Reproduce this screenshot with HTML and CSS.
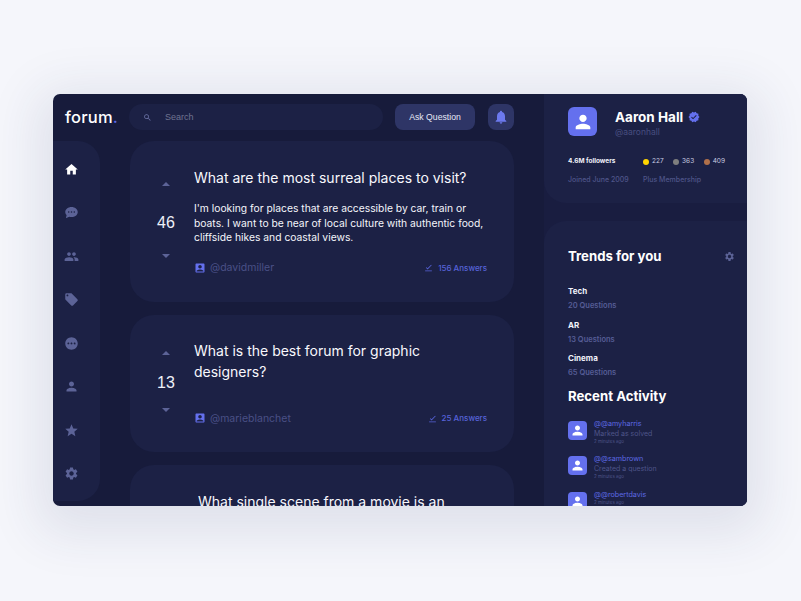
FILE: index.html
```html
<!DOCTYPE html>
<html>
<head>
    <title>forum.</title>
    <link rel="stylesheet" href="styles.css">
</head>
<body>
    <svg class="icon-defs" width="0" height="0">
        <symbol id="i-home" viewBox="0 0 24 24"><path d="M10 20v-6h4v6h5v-8h3L12 3 2 12h3v8z"/></symbol>
        <symbol id="i-chat" viewBox="0 0 24 24"><path d="M12 3C6.5 3 2 6.6 2 11c0 1.9.8 3.6 2.2 5L3 21l5.3-2.3c1.2.4 2.4.6 3.7.6 5.500 0 10-3.700 10-8.300S17.500 3 12 3zM7.500 12.500a1.300 1.300 0 1 1 0-2.600 1.300 1.300 0 0 1 0 2.600zm4.500 0a1.300 1.300 0 1 1 0-2.600 1.300 1.300 0 0 1 0 2.600zm4.500 0a1.300 1.300 0 1 1 0-2.600 1.300 1.300 0 0 1 0 2.600z"/></symbol>
        <symbol id="i-people" viewBox="0 0 24 24"><path d="M16 11c1.660 0 2.990-1.340 2.990-3S17.660 5 16 5c-1.660 0-3 1.340-3 3s1.340 3 3 3zm-8 0c1.660 0 2.990-1.340 2.990-3S9.660 5 8 5C6.340 5 5 6.340 5 8s1.340 3 3 3zm0 2c-2.330 0-7 1.170-7 3.500V19h14v-2.500c0-2.330-4.670-3.500-7-3.500zm8 0c-.290 0-.620.020-.970.050 1.160.840 1.970 1.970 1.970 3.450V19h6v-2.500c0-2.330-4.670-3.500-7-3.500z"/></symbol>
        <symbol id="i-label" viewBox="0 0 24 24"><path d="M21.410 11.580l-9-9C12.050 2.220 11.550 2 11 2H4c-1.100 0-2 .9-2 2v7c0 .55.220 1.050.590 1.420l9 9c.360.360.860.580 1.410.580s1.050-.220 1.410-.590l7-7c.370-.360.590-.860.590-1.410s-.230-1.060-.590-1.420zM5.500 7C4.670 7 4 6.330 4 5.500S4.670 4 5.500 4 7 4.670 7 5.500 6.330 7 5.500 7z"/></symbol>
        <symbol id="i-more" viewBox="0 0 24 24"><path d="M12 2C6.480 2 2 6.480 2 12s4.480 10 10 10 10-4.480 10-10S17.520 2 12 2zM7 13.500c-.830 0-1.500-.670-1.500-1.500s.670-1.500 1.500-1.500 1.500.670 1.500 1.500-.670 1.500-1.500 1.500zm5 0c-.830 0-1.500-.670-1.500-1.500s.670-1.500 1.500-1.500 1.500.670 1.500 1.500-.670 1.500-1.500 1.500zm5 0c-.830 0-1.500-.670-1.500-1.500s.670-1.500 1.500-1.500 1.500.670 1.500 1.500-.670 1.500-1.500 1.500z"/></symbol>
        <symbol id="i-person" viewBox="0 0 24 24"><path d="M12 12c2.210 0 4-1.790 4-4s-1.790-4-4-4-4 1.790-4 4 1.790 4 4 4zm0 2c-2.670 0-8 1.340-8 4v2h16v-2c0-2.660-5.330-4-8-4z"/></symbol>
        <symbol id="i-star" viewBox="0 0 24 24"><path d="M12 17.270L18.180 21l-1.640-7.030L22 9.240l-7.190-.610L12 2 9.190 8.630 2 9.240l5.460 4.730L5.820 21z"/></symbol>
        <symbol id="i-gear" viewBox="0 0 24 24"><path d="M19.140 12.940c.040-.300.060-.610.060-.940 0-.320-.020-.640-.070-.940l2.030-1.580c.180-.140.230-.410.120-.610l-1.920-3.320c-.120-.220-.370-.290-.590-.220l-2.390.960c-.500-.380-1.030-.700-1.620-.940l-.360-2.540c-.040-.240-.240-.410-.480-.410h-3.840c-.240 0-.430.170-.470.410l-.360 2.540c-.590.240-1.130.570-1.620.940l-2.390-.960c-.220-.080-.470 0-.590.220L2.740 8.870c-.120.210-.080.470.120.610l2.030 1.580c-.050.300-.090.630-.090.940s.020.640.070.940l-2.030 1.580c-.180.140-.230.410-.120.610l1.920 3.320c.120.220.370.290.590.220l2.390-.960c.500.380 1.030.700 1.620.940l.360 2.540c.050.240.240.410.480.410h3.840c.240 0 .440-.170.470-.410l.360-2.540c.590-.240 1.130-.560 1.620-.940l2.390.960c.220.080.470 0 .590-.220l1.920-3.320c.120-.220.070-.470-.120-.610l-2.010-1.580zM12 15.600c-1.980 0-3.600-1.620-3.600-3.600s1.620-3.600 3.600-3.600 3.600 1.620 3.600 3.600-1.620 3.600-3.600 3.600z"/></symbol>
        <symbol id="i-search" viewBox="0 0 24 24"><path d="M15.500 14h-.790l-.280-.270C15.410 12.590 16 11.110 16 9.500 16 5.910 13.090 3 9.500 3S3 5.910 3 9.500 5.910 16 9.500 16c1.610 0 3.090-.590 4.230-1.570l.270.280v.790l5 4.990L20.490 19l-4.990-5zm-6 0C7.010 14 5 11.990 5 9.500S7.010 5 9.500 5 14 7.010 14 9.500 11.990 14 9.500 14z"/></symbol>
        <symbol id="i-bell" viewBox="0 0 24 24"><path d="M12 22c1.100 0 2-.9 2-2h-4c0 1.100.9 2 2 2zm6-6v-5c0-3.070-1.630-5.640-4.500-6.320V4c0-.830-.670-1.500-1.500-1.500s-1.500.670-1.500 1.500v.680C7.640 5.360 6 7.920 6 11v5l-2 2v1h16v-1l-2-2z"/></symbol>
        <symbol id="i-account" viewBox="0 0 24 24"><path d="M19 3H5c-1.100 0-2 .9-2 2v14c0 1.100.9 2 2 2h14c1.100 0 2-.9 2-2V5c0-1.100-.9-2-2-2zm-7 3c1.930 0 3.500 1.570 3.500 3.500S13.930 13 12 13s-3.500-1.570-3.500-3.500S10.070 6 12 6zm7 13H5v-.230c0-.620.280-1.200.760-1.580C7.470 15.820 9.640 15 12 15s4.530.820 6.240 2.190c.480.380.760.970.760 1.580V19z"/></symbol>
        <symbol id="i-answers" viewBox="0 0 24 24"><path d="M3 20h18v2H3zM5 12.500l1.500-1.500 3 3L19 4.500 20.500 6l-11 11z"/></symbol>
        <symbol id="i-verified" viewBox="0 0 24 24"><path d="M23 12l-2.440-2.790.340-3.690-3.610-.820-1.890-3.200L12 2.960 8.600 1.500 6.710 4.690 3.100 5.500l.340 3.700L1 12l2.440 2.790-.340 3.700 3.610.820L8.600 22.500l3.400-1.470 3.400 1.460 1.890-3.190 3.610-.820-.340-3.690L23 12zm-12.910 4.720l-3.800-3.810 1.480-1.480 2.320 2.330 5.850-5.870 1.480 1.480-7.330 7.350z"/></symbol>
    </svg>

    <div class="app">
        <div class="main-col">
            <header class="topbar">
                <div class="logo">forum<span class="logo-dot">.</span></div>
                <div class="search">
                    <svg class="search-icon"><use href="#i-search"/></svg>
                    <span>Search</span>
                </div>
                <button class="ask-btn">Ask Question</button>
                <button class="bell-btn"><svg><use href="#i-bell"/></svg></button>
            </header>

            <div class="content">
                <nav class="sidebar">
                    <svg class="nav-icon active"><use href="#i-home"/></svg>
                    <svg class="nav-icon"><use href="#i-chat"/></svg>
                    <svg class="nav-icon"><use href="#i-people"/></svg>
                    <svg class="nav-icon"><use href="#i-label"/></svg>
                    <svg class="nav-icon"><use href="#i-more"/></svg>
                    <svg class="nav-icon"><use href="#i-person"/></svg>
                    <svg class="nav-icon"><use href="#i-star"/></svg>
                    <svg class="nav-icon"><use href="#i-gear"/></svg>
                </nav>

                <div class="questions">
                    <article class="card card-first">
                        <div class="vote">
                            <span class="arrow arrow-up"></span>
                            <span class="count">46</span>
                            <span class="arrow arrow-down"></span>
                        </div>
                        <div class="card-body">
                            <h2>What are the most surreal places to visit?</h2>
                            <p>I'm looking for places that are accessible by car, train or boats. I want to be near of local culture with authentic food, cliffside hikes and coastal views.</p>
                            <div class="card-foot">
                                <svg class="user-icon"><use href="#i-account"/></svg>
                                <span class="user">@davidmiller</span>
                                <svg class="answer-icon"><use href="#i-answers"/></svg>
                                <span class="answers">156 Answers</span>
                            </div>
                        </div>
                    </article>

                    <article class="card card-second">
                        <div class="vote">
                            <span class="arrow arrow-up"></span>
                            <span class="count">13</span>
                            <span class="arrow arrow-down"></span>
                        </div>
                        <div class="card-body">
                            <h2>What is the best forum for graphic designers?</h2>
                            <div class="card-foot">
                                <svg class="user-icon"><use href="#i-account"/></svg>
                                <span class="user">@marieblanchet</span>
                                <svg class="answer-icon"><use href="#i-answers"/></svg>
                                <span class="answers">25 Answers</span>
                            </div>
                        </div>
                    </article>

                    <article class="card card-third">
                        <h2>What single scene from a movie is an</h2>
                    </article>
                </div>
            </div>
        </div>

        <aside class="right-col">
            <section class="profile">
                <div class="profile-top">
                    <div class="avatar-big"><svg><use href="#i-person"/></svg></div>
                    <div class="profile-text">
                        <div class="profile-name">Aaron Hall <svg class="verified"><use href="#i-verified"/></svg></div>
                        <div class="profile-handle">@aaronhall</div>
                    </div>
                </div>
                <div class="stats">
                    <strong>4.6M followers</strong>
                    <div class="medals">
                        <span class="medal"><i class="dot dot-gold"></i>227</span>
                        <span class="medal"><i class="dot dot-silver"></i>363</span>
                        <span class="medal"><i class="dot dot-bronze"></i>409</span>
                    </div>
                    <span class="muted">Joined June 2009</span>
                    <span class="muted">Plus Membership</span>
                </div>
            </section>

            <section class="side-panel">
                <div class="trends-head">
                    <h3>Trends for you</h3>
                    <svg class="trends-gear"><use href="#i-gear"/></svg>
                </div>
                <ul class="trends">
                    <li><strong>Tech</strong><span>20 Questions</span></li>
                    <li><strong>AR</strong><span>13 Questions</span></li>
                    <li><strong>Cinema</strong><span>65 Questions</span></li>
                </ul>
                <h3 class="activity-title">Recent Activity</h3>
                <ul class="activity">
                    <li>
                        <div class="avatar-small"><svg><use href="#i-person"/></svg></div>
                        <div class="activity-text"><b>@@amyharris</b><span>Marked as solved</span><small>2 minutes ago</small></div>
                    </li>
                    <li>
                        <div class="avatar-small"><svg><use href="#i-person"/></svg></div>
                        <div class="activity-text"><b>@@sambrown</b><span>Created a question</span><small>2 minutes ago</small></div>
                    </li>
                    <li>
                        <div class="avatar-small"><svg><use href="#i-person"/></svg></div>
                        <div class="activity-text"><b>@@robertdavis</b><small>2 minutes ago</small></div>
                    </li>
                </ul>
            </section>
        </aside>
    </div>
</body>
</html>
```

FILE: styles.css
```css
* {
    box-sizing: border-box;
}

html, body {
    height: 100%;
}

body {
    margin: 0;
    padding: 94px 54px 0 53px;
    overflow: hidden;
    background-color: #f5f6fb;
    font-family: Inter, "Open Sans", sans-serif;
}

.icon-defs {
    display: block;
}

h2, h3, p, ul {
    margin: 0;
    padding: 0;
}

ul {
    list-style: none;
}

.app {
    display: flex;
    width: 694px;
    height: 412px;
    overflow: hidden;
    border-radius: 7px;
    background-color: #171b3b;
    box-shadow: 0 12px 50px 16px rgba(40, 50, 100, 0.1);
}

.main-col {
    width: 491px;
    flex-shrink: 0;
}

.topbar {
    display: flex;
    align-items: center;
    height: 47px;
    padding: 0 30px 1px 12px;
}

.logo {
    width: 64px;
    color: #fff;
    font-size: 16.500px;
    font-weight: 500;
    letter-spacing: 0.2px;
}

.logo-dot {
    color: #5d6ae8;
}

.search {
    display: flex;
    align-items: center;
    width: 254px;
    height: 26px;
    padding-left: 14px;
    border-radius: 13px;
    background-color: #1c2145;
    color: #6f7390;
    font-family: "Liberation Sans", sans-serif;
    font-size: 9px;
}

.search-icon {
    width: 9px;
    height: 9px;
    margin-right: 13px;
    fill: #6d74a8;
}

.ask-btn {
    width: 80px;
    height: 26px;
    margin-left: 12px;
    border: none;
    border-radius: 8px;
    background-color: #2e3566;
    color: #e6e8f5;
    font-family: "Liberation Sans", sans-serif;
    font-size: 8.700px;
}

.bell-btn {
    display: flex;
    align-items: center;
    justify-content: center;
    width: 26px;
    height: 26px;
    margin-left: 13px;
    padding: 0;
    border: none;
    border-radius: 8px;
    background-color: #2e3566;
}

.bell-btn svg {
    width: 16px;
    height: 16px;
    fill: #6c79ee;
}

.content {
    display: flex;
}

.sidebar {
    display: flex;
    flex-direction: column;
    align-items: center;
    justify-content: space-between;
    width: 47px;
    height: 360px;
    padding: 21px 10px 20px 0;
    border-radius: 0 22px 22px 0;
    background-color: #1c2145;
}

.nav-icon {
    width: 15px;
    height: 15px;
    fill: #5c6397;
}

.nav-icon.active {
    fill: #fff;
}

.questions {
    margin-left: 30px;
    width: 384px;
}

.card {
    display: flex;
    margin-bottom: 13px;
    border-radius: 24px;
    background-color: #1c2145;
}

.card-first {
    height: 161px;
}

.card-second {
    height: 137px;
}

.card-third {
    height: 80px;
    padding: 26px 0 0 68px;
}

.vote {
    display: flex;
    flex-direction: column;
    align-items: center;
    width: 72px;
    flex-shrink: 0;
    margin-right: -8px;
    color: #eef0f8;
    font-family: "Liberation Sans", sans-serif;
}

.card-first .vote {
    padding-top: 41px;
}

.card-second .vote {
    padding-top: 36px;
}

.arrow {
    width: 0;
    height: 0;
    border-left: 4px solid transparent;
    border-right: 4px solid transparent;
}

.arrow-up {
    border-bottom: 4px solid #5c6397;
}

.arrow-down {
    border-top: 4px solid #5c6397;
}

.count {
    font-size: 16px;
    line-height: 18px;
}

.card-first .count {
    margin: 28px 0 22px;
}

.card-second .count {
    margin: 19px 0 16px;
}

.card-body {
    flex: 1;
    padding-right: 27px;
}

.card-first .card-body {
    padding-top: 26px;
}

.card-second .card-body {
    padding-top: 25px;
}

h2 {
    color: #f8f8fd;
    font-size: 14px;
    font-weight: 400;
    line-height: 21px;
}

.card p {
    margin-top: 13px;
    color: #f4f5fb;
    font-size: 10.300px;
    line-height: 14.500px;
}

.card-foot {
    display: flex;
    align-items: center;
    height: 12px;
    color: #4a5085;
}

.card-first .card-foot {
    margin-top: 17px;
}

.card-second .card-foot {
    margin-top: 30px;
}

.user-icon {
    width: 12px;
    height: 12px;
    fill: #6470ee;
    margin-right: 4px;
}

.user {
    flex: 1;
    font-size: 10.500px;
}

.answer-icon {
    width: 9px;
    height: 9px;
    margin-right: 5px;
    fill: #5763d9;
}

.answers {
    color: #5763d9;
    font-size: 8px;
    font-weight: 500;
}

.right-col {
    flex: 1;
    background-color: #191d40;
}

.profile {
    height: 109px;
    padding: 13px 0 0 24px;
    border-radius: 0 0 0 22px;
    background-color: #1c2145;
}

.profile-top {
    display: flex;
    height: 29px;
}

.profile-text {
    padding-top: 1px;
}

.avatar-big {
    display: flex;
    align-items: center;
    justify-content: center;
    width: 29px;
    height: 29px;
    margin-right: 18px;
    border-radius: 6px;
    background-color: #6470ee;
}

.avatar-big svg {
    width: 22px;
    height: 22px;
    fill: #fff;
}

.profile-name {
    display: flex;
    align-items: center;
    gap: 5px;
    color: #fff;
    font-size: 13.500px;
    font-weight: 700;
    line-height: 18px;
}

.verified {
    width: 12px;
    height: 12px;
    fill: #6470ee;
}

.profile-handle {
    margin-top: 1px;
    color: #484e80;
    font-size: 8.500px;
    line-height: 11px;
}

.stats {
    display: grid;
    grid-template-columns: 75px 1fr;
    row-gap: 9px;
    margin-top: 21px;
    font-size: 6.500px;
    line-height: 9px;
}

.stats strong {
    color: #f0f1fa;
    font-weight: 700;
}

.medals {
    display: flex;
    gap: 9.500px;
    color: #c9cce0;
}

.medal {
    display: flex;
    align-items: center;
    gap: 3px;
}

.dot {
    width: 6px;
    height: 6px;
    border-radius: 50%;
}

.dot-gold {
    background-color: #ffd500;
}

.dot-silver {
    background-color: #7f7f7f;
}

.dot-bronze {
    background-color: #b0704a;
}

.muted {
    color: #4f5589;
    font-size: 7px;
    font-weight: 500;
}

.side-panel {
    height: 303px;
    margin-top: 18px;
    padding: 25px 0 0 24px;
    border-radius: 22px 0 0 0;
    background-color: #1c2145;
}

.trends-head {
    display: flex;
    align-items: center;
    justify-content: space-between;
    padding-right: 12px;
}

h3 {
    color: #fff;
    font-size: 13.200px;
    font-weight: 700;
    line-height: 20px;
}

.trends-gear {
    width: 11px;
    height: 11px;
    fill: #5c6397;
}

.trends {
    margin-top: 20px;
}

.trends li {
    height: 33.500px;
}

.trends strong,
.trends span {
    display: block;
    line-height: 10px;
}

.trends strong {
    color: #f0f1fa;
    font-size: 8px;
}

.trends span {
    margin-top: 5px;
    color: #565d96;
    font-size: 7.500px;
    font-weight: 600;
}

.activity-title {
    margin-top: -1px;
}

.activity {
    margin-top: 15px;
}

.activity li {
    display: flex;
    height: 35.500px;
}

.avatar-small {
    display: flex;
    align-items: center;
    justify-content: center;
    width: 19px;
    height: 19px;
    margin-right: 7px;
    border-radius: 4px;
    background-color: #6470ee;
}

.avatar-small svg {
    width: 15px;
    height: 15px;
    fill: #fff;
}

.activity-text {
    margin-top: -2px;
}

.activity b,
.activity span,
.activity small {
    display: block;
}

.activity b {
    color: #5d69e2;
    font-size: 7.200px;
    font-weight: 400;
    line-height: 9px;
}

.activity span {
    margin-top: 1px;
    color: #4f5589;
    font-size: 7px;
    line-height: 9px;
}

.activity small {
    color: #4f5589;
    font-size: 4.500px;
    line-height: 7px;
}
```
